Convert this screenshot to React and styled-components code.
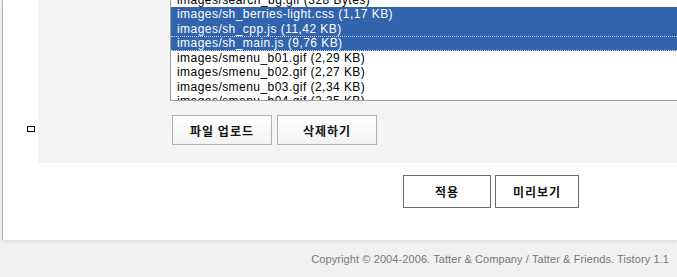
import React from "react";
import styled, { createGlobalStyle } from "styled-components";

const GlobalStyle = createGlobalStyle`
  html, body {
    margin: 0;
    padding: 0;
    background: #f1f1f1;
    overflow: hidden;
  }
`;

const Page = styled.div`
  margin-left: 2px;
  height: 240px;
  background: #ffffff;
  border-left: 1px solid #b4b4b4;
  box-shadow: 0 2px 3px rgba(0, 0, 0, 0.08);
  display: flex;
  flex-direction: column;
  font-family: "Liberation Sans", "Noto Sans CJK KR", sans-serif;
`;

const TopRow = styled.div`
  display: flex;
`;

const Gutter = styled.div`
  width: 35px;
  flex: none;
  display: flex;
  justify-content: flex-end;
  padding-top: 126px;
`;

const Check = styled.span`
  width: 6px;
  height: 4px;
  border: 1px solid #000;
  margin-right: 3px;
`;

const Panel = styled.div`
  flex: 1;
  background: #f4f4f4;
  height: 163px;
  padding-left: 132px;
  box-sizing: border-box;
  overflow: hidden;
`;

const List = styled.div`
  height: 100px;
  background: #fff;
  border-left: 1px solid #a0a0a0;
  border-bottom: 1px solid #a0a0a0;
  overflow: hidden;
`;

const Rows = styled.div`
  margin-top: -7.5px;
`;

const Row = styled.div`
  height: 14.5px;
  padding-left: 6px;
  font-size: 12px;
  letter-spacing: 0.45px;
  white-space: nowrap;
  color: ${(p) => (p.$selected ? "#ffffff" : "#000000")};
  background: ${(p) => (p.$selected ? "#3164ac" : "transparent")};
  box-sizing: border-box;
  border-top: ${(p) => (p.$focus ? "1px dotted #c8d4ea" : "none")};
  border-bottom: ${(p) => (p.$focus ? "1px dotted #c8d4ea" : "none")};
  line-height: ${(p) => (p.$focus ? "12.5px" : "14.5px")};
`;

const Buttons = styled.div`
  display: flex;
  gap: 5px;
  margin-top: 14px;
  padding-left: 2px;
`;

const Button = styled.button`
  width: ${(p) => p.$w}px;
  height: ${(p) => p.$h}px;
  padding: 0;
  border: 1px solid ${(p) => (p.$dark ? "#6a6a6a" : "#b0b0b0")};
  background: ${(p) =>
    p.$dark ? "#ffffff" : "linear-gradient(#ffffff, #f2f2f2)"};
  font-family: "Noto Sans CJK KR", sans-serif;
  font-weight: 700;
  font-size: 12px;
  color: #111;
  letter-spacing: 1px;
`;

const ActionRow = styled.div`
  display: flex;
  gap: 4px;
  margin-top: 12px;
  padding-left: 400px;
`;

const Footer = styled.div`
  padding: 13px 8px 0 0;
  text-align: right;
  font-family: "Liberation Sans", sans-serif;
  font-size: 11px;
  letter-spacing: 0.09px;
  color: #777;
`;

const files = [
  { name: "images/search_bg.gif (328 Bytes)" },
  { name: "images/sh_berries-light.css (1,17 KB)", sel: true },
  { name: "images/sh_cpp.js (11,42 KB)", sel: true },
  { name: "images/sh_main.js (9,76 KB)", sel: true, focus: true },
  { name: "images/smenu_b01.gif (2,29 KB)" },
  { name: "images/smenu_b02.gif (2,27 KB)" },
  { name: "images/smenu_b03.gif (2,34 KB)" },
  { name: "images/smenu_b04.gif (2,35 KB)" },
];

export default function App() {
  return (
    <>
      <GlobalStyle />
      <Page>
        <TopRow>
          <Gutter>
            <Check />
          </Gutter>
          <Panel>
            <List>
              <Rows>
                {files.map((f) => (
                  <Row key={f.name} $selected={f.sel} $focus={f.focus}>
                    {f.name}
                  </Row>
                ))}
              </Rows>
            </List>
            <Buttons>
              <Button $w={100} $h={30}>파일 업로드</Button>
              <Button $w={100} $h={30}>삭제하기</Button>
            </Buttons>
          </Panel>
        </TopRow>
        <ActionRow>
          <Button $w={88} $h={33} $dark>적용</Button>
          <Button $w={84} $h={33} $dark>미리보기</Button>
        </ActionRow>
      </Page>
      <Footer>
        Copyright © 2004-2006. Tatter &amp; Company / Tatter &amp; Friends. Tistory 1.1
      </Footer>
    </>
  );
}
